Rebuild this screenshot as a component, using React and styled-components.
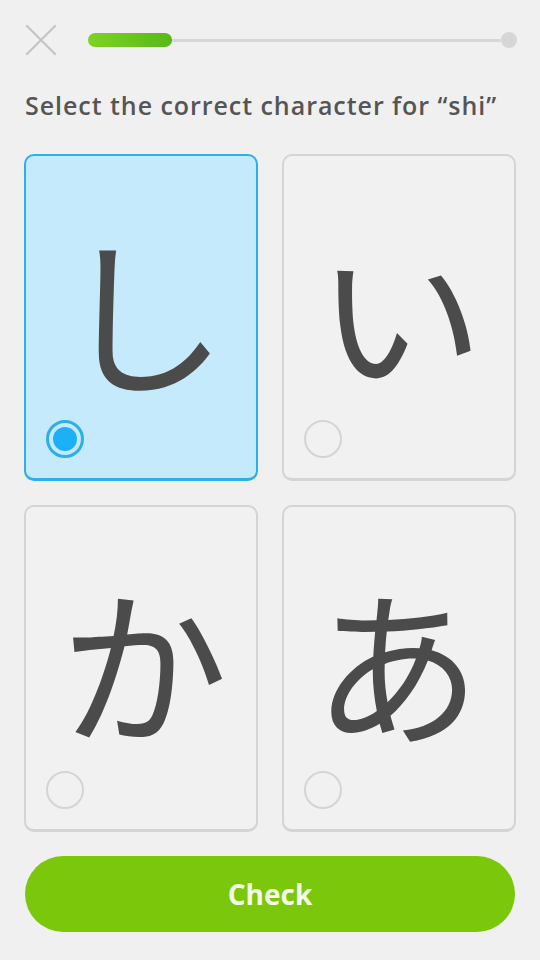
import React from "react";
import styled, { createGlobalStyle } from "styled-components";

const Global = createGlobalStyle`
  html, body {
    margin: 0;
    padding: 0;
    background: #f0f0f0;
  }
  body {
    font-family: "Open Sans", Lato, sans-serif;
  }
`;

const Screen = styled.div`
  width: 540px;
  height: 960px;
  box-sizing: border-box;
  padding: 24px 24px 0 24px;
  display: flex;
  flex-direction: column;
  background: #f0f0f0;
`;

const TopBar = styled.div`
  display: flex;
  align-items: center;
  gap: 30px;
  height: 32px;
`;

const CloseBtn = styled.button`
  border: none;
  background: none;
  padding: 0;
  width: 34px;
  height: 34px;
  display: flex;
  align-items: center;
  justify-content: center;
`;

const Track = styled.div`
  position: relative;
  flex: 1;
  height: 14px;
  display: flex;
  align-items: center;
  margin-right: -1px;
`;

const TrackLine = styled.div`
  flex: 1;
  height: 3px;
  background: #d6d6d6;
  border-radius: 2px;
`;

const Fill = styled.div`
  position: absolute;
  left: 0;
  top: 0;
  height: 14px;
  border-radius: 7px;
  background: linear-gradient(90deg, #7ed321, #58b91a);
`;

const EndDot = styled.div`
  width: 16px;
  height: 16px;
  border-radius: 50%;
  background: #d6d6d6;
`;

const Title = styled.h1`
  margin: 33px 0 0 1px;
  font-family: "Open Sans", Lato, sans-serif;
  font-size: 25px;
  font-weight: 600;
  color: #555;
  letter-spacing: 0.95px;
  line-height: 32px;
  white-space: nowrap;
`;

const Grid = styled.div`
  margin-top: 33px;
  display: grid;
  grid-template-columns: 234px 234px;
  grid-auto-rows: 327px;
  gap: 24px;
`;

const Card = styled.div`
  position: relative;
  box-sizing: border-box;
  border-radius: 10px;
  border: 2px solid ${(p) => (p.$selected ? "#2cb0e8" : "#d4d4d4")};
  border-bottom-width: 3px;
  background: ${(p) => (p.$selected ? "#c4eafc" : "#f1f1f1")};
  display: flex;
  align-items: center;
  justify-content: center;
`;

const Kana = styled.span`
  font-family: "Noto Sans CJK JP", sans-serif;
  font-size: 168px;
  line-height: 1;
  font-weight: 400;
  color: #4b4b4b;
  transform: translate(${(p) => p.$dx || 0}px, ${(p) => p.$dy || 0}px)
    scaleY(${(p) => p.$sy || 1});
`;

const Radio = styled.div`
  position: absolute;
  left: 20px;
  bottom: 20px;
  box-sizing: border-box;
  width: 38px;
  height: 38px;
  border-radius: 50%;
  border: ${(p) => (p.$selected ? "3px solid #2cb0e8" : "2px solid #d4d4d4")};
  display: flex;
  align-items: center;
  justify-content: center;
  &::after {
    content: "";
    display: ${(p) => (p.$selected ? "block" : "none")};
    width: 24px;
    height: 24px;
    border-radius: 50%;
    background: #1cb0f6;
  }
`;

const CheckButton = styled.button`
  margin-top: 24px;
  margin-left: 1px;
  width: 490px;
  height: 76px;
  border: none;
  border-radius: 38px;
  background: #7ac70c;
  color: #f4fde8;
  font-family: "Open Sans", Lato, sans-serif;
  font-size: 28px;
  font-weight: 700;
`;

const choices = [
  { ch: "し", selected: true, dx: 2, dy: -8 },
  { ch: "い", dx: 1, dy: -6, sy: 0.9 },
  { ch: "か", dx: 3, dy: -9 },
  { ch: "あ", dx: -2, dy: -8 },
];

export default function App() {
  return (
    <>
      <Global />
      <Screen>
        <TopBar>
          <CloseBtn aria-label="close">
            <svg width="32" height="32" viewBox="0 0 32 32">
              <path d="M2 2 L30 30 M30 2 L2 30" stroke="#c4c4c4" strokeWidth="2.2" strokeLinecap="round" />
            </svg>
          </CloseBtn>
          <Track>
            <TrackLine />
            <EndDot />
            <Fill style={{ width: "84px" }} />
          </Track>
        </TopBar>
        <Title>Select the correct character for “shi”</Title>
        <Grid>
          {choices.map((c) => (
            <Card key={c.ch} $selected={c.selected}>
              <Kana $dx={c.dx} $dy={c.dy} $sy={c.sy}>{c.ch}</Kana>
              <Radio $selected={c.selected} />
            </Card>
          ))}
        </Grid>
        <CheckButton>Check</CheckButton>
      </Screen>
    </>
  );
}
